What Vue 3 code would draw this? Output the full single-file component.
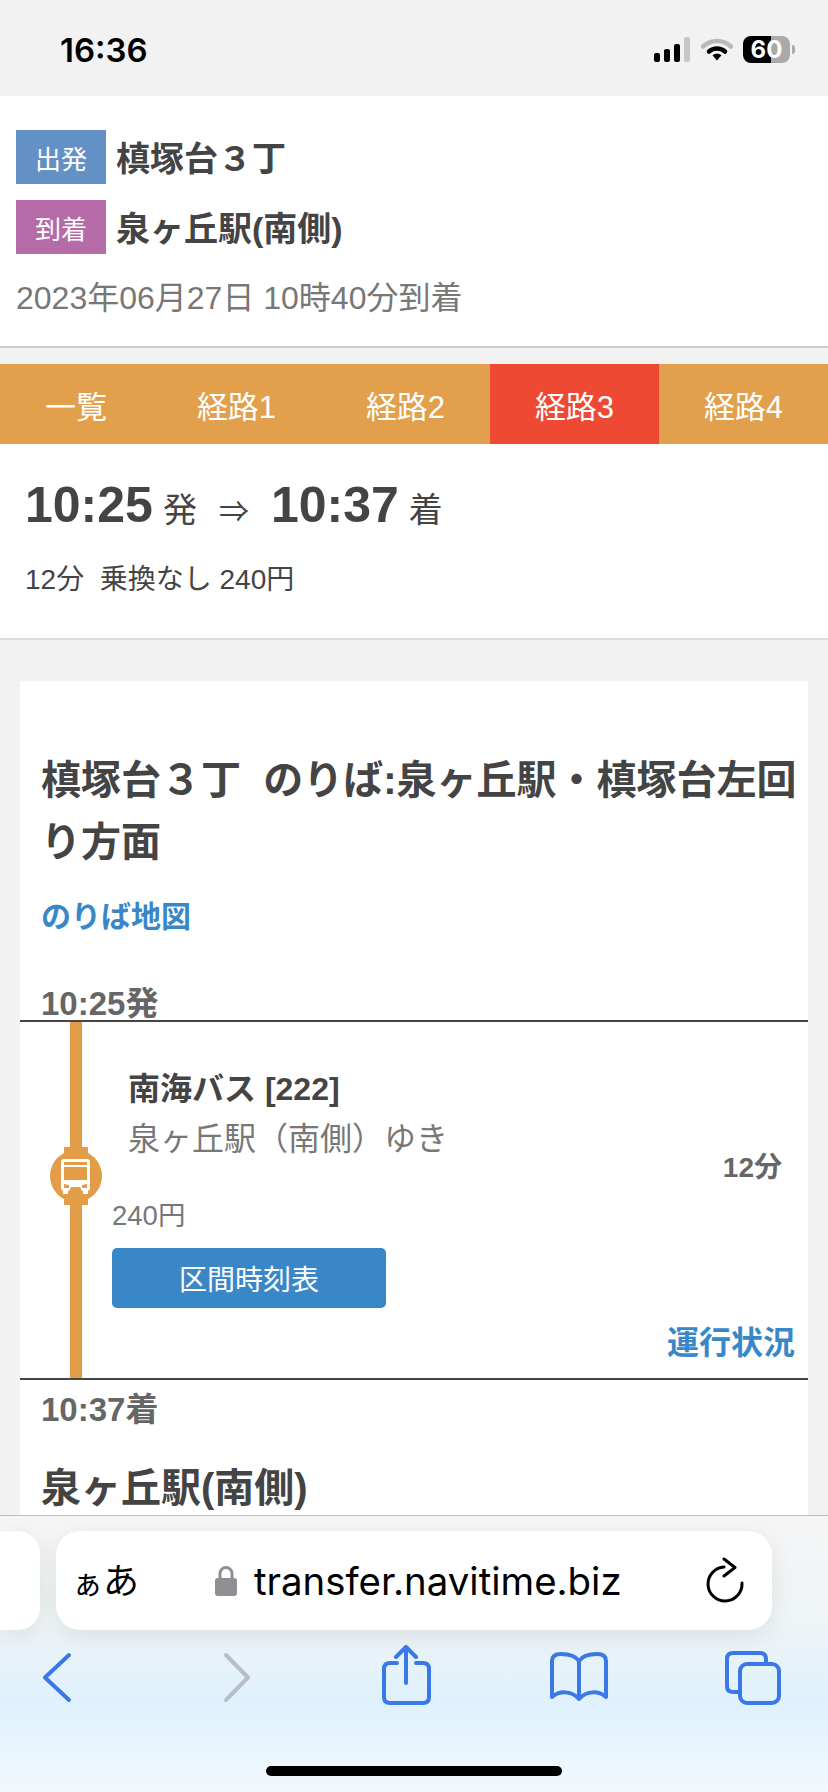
<script setup>
const tabs = [
  { label: '一覧', wide: false },
  { label: '経路1', wide: true },
  { label: '経路2', wide: true },
  { label: '経路3', wide: true, active: true },
  { label: '経路4', wide: true }
]
</script>

<template>
  <div class="screen">
    <header class="status">
      <span class="clock">16:36</span>
      <div class="status-icons">
        <div class="signal"><i class="b1"></i><i class="b2"></i><i class="b3"></i><i class="b4"></i></div>
        <svg class="wifi" width="32" height="24" viewBox="0 0 32 24">
          <path d="M2 9.5C10 2 22 2 30 9.5" fill="none" stroke="#b9b9b9" stroke-width="4.5" stroke-linecap="round"/>
          <path d="M8 14.5C12.5 10.5 19.5 10.5 24 14.5" fill="none" stroke="#000" stroke-width="4.5" stroke-linecap="round"/>
          <path d="M11.5 18.2C14.5 16 17.5 16 20.5 18.2L16 23.5Z" fill="#000"/>
        </svg>
        <div class="battery">60</div>
      </div>
    </header>

    <main class="page">
      <section class="route">
        <div class="point">
          <span class="badge dep">出発</span>
          <span class="point-name">槙塚台３丁</span>
        </div>
        <div class="point">
          <span class="badge arr">到着</span>
          <span class="point-name">泉ヶ丘駅(南側)</span>
        </div>
        <p class="when">2023年06月27日 10時40分到着</p>
      </section>

      <nav class="tabs">
        <span
          v-for="t in tabs"
          :key="t.label"
          class="tab"
          :class="{ wide: t.wide, active: t.active }"
        >{{ t.label }}</span>
      </nav>

      <section class="summary">
        <div class="times">
          <strong class="big">10:25</strong><span class="suffix">発</span>
          <span class="arrow">⇒</span>
          <strong class="big">10:37</strong><span class="suffix">着</span>
        </div>
        <p class="meta">12分&nbsp;&nbsp;乗換なし 240円</p>
      </section>

      <section class="card">
        <h2 class="stop-title">槙塚台３丁&nbsp;&nbsp;のりば:泉ヶ丘駅・槙塚台左回り方面</h2>
        <a class="stop-map">のりば地図</a>
        <div class="stamp first">10:25発</div>

        <div class="leg">
          <div class="rail">
            <span class="rail-top"></span>
            <svg class="rail-icon" width="52" height="58" viewBox="0 0 52 58">
              <rect x="14" y="0" width="24" height="58" fill="#e39d48"/>
              <circle cx="26" cy="29" r="26" fill="#e39d48"/>
              <path d="M14 12H37Q40 12 40 15V41Q40 44 37 44H14Q11 44 11 41V15Q11 12 14 12Z" fill="#fff"/>
              <rect x="14" y="15" width="23" height="3" fill="#e39d48"/>
              <rect x="14" y="20" width="23" height="13" fill="#e39d48"/>
              <path d="M14 37L19 38V41H14ZM37 37L32 38V41H37Z" fill="#e39d48"/>
              <path d="M21 40H30L32 44H19Z" fill="#e39d48"/>
              <rect x="13" y="44" width="5" height="3" fill="#fff"/>
              <rect x="33" y="44" width="5" height="3" fill="#fff"/>
            </svg>
            <span class="rail-bottom"></span>
          </div>
          <div class="leg-body">
            <div class="leg-head">
              <div class="leg-names">
                <div class="line-name">南海バス [222]</div>
                <div class="line-dest">泉ヶ丘駅（南側）ゆき</div>
              </div>
              <div class="leg-mins">12分</div>
            </div>
            <div class="fare">240円</div>
            <button class="timetable">区間時刻表</button>
            <a class="status-link">運行状況</a>
          </div>
        </div>

        <div class="stamp last">10:37着</div>
        <h2 class="stop-title end">泉ヶ丘駅(南側)</h2>
      </section>
    </main>

    <footer class="toolbar">
      <div class="url-row">
        <div class="prev-tab"></div>
        <div class="address">
          <span class="aa"><small>ぁ</small>あ</span>
          <svg class="lock" width="22" height="31" viewBox="0 0 22 31">
            <path d="M5 15V8.5a6 6 0 0 1 12 0V15" fill="none" stroke="#8e8e93" stroke-width="3"/>
            <rect x="0" y="13" width="22" height="18" rx="3" fill="#8e8e93"/>
          </svg>
          <span class="url">transfer.navitime.biz</span>
          <svg class="reload" width="40" height="48" viewBox="0 0 40 48">
            <path d="M19 10A17 17 0 1 0 37 26" fill="none" stroke="#000" stroke-width="3" stroke-linecap="round"/>
            <path d="M19 2L30 10.500L19 19" fill="none" stroke="#000" stroke-width="3" stroke-linecap="round" stroke-linejoin="round"/>
          </svg>
        </div>
      </div>
      <div class="actions">
        <svg width="60" height="64" viewBox="0 0 60 64"><path class="ico" d="M42 10L18 32.500L42 55"/></svg>
        <svg width="60" height="64" viewBox="0 0 60 64"><path class="ico off" d="M20 10L42 32.500L20 55"/></svg>
        <svg width="60" height="64" viewBox="0 0 60 64">
          <path class="ico" d="M30 3V38M20 12L30 2L40 12"/>
          <path class="ico" d="M21 18H14Q8 18 8 24V52Q8 58 14 58H47Q53 58 53 52V24Q53 18 47 18H40"/>
        </svg>
        <svg width="60" height="64" viewBox="0 0 60 64">
          <path class="ico" d="M30 16C26 10 19 9 12 9C6 9 3 11 3 16V52C10 46 22 45 30 54C38 45 50 46 57 52V16C57 11 54 9 48 9C41 9 34 10 30 16V54"/>
        </svg>
        <svg width="60" height="64" viewBox="0 0 60 64">
          <path class="ico" d="M17 47H11Q5 47 5 41V14Q5 8 11 8H38Q44 8 44 14V18"/>
          <rect class="ico" x="18" y="19" width="39" height="39" rx="7"/>
        </svg>
      </div>
      <div class="home-bar"></div>
    </footer>
  </div>
</template>

<style scoped>
.screen {
  width: 828px;
  height: 1792px;
  display: flex;
  flex-direction: column;
  overflow: hidden;
  background: #f2f2f2;
  color: #444;
  font-family: "Liberation Sans", "Noto Sans CJK JP", sans-serif;
}
.status {
  flex: none;
  height: 96px;
  display: flex;
  justify-content: space-between;
  align-items: center;
  padding: 0 38px 0 60px;
  box-sizing: border-box;
}
.clock {
  margin-top: 4px;
  font-family: Inter, sans-serif;
  font-weight: 600;
  font-size: 33px;
  color: #000;
}
.status-icons {
  display: flex;
  align-items: center;
  margin-top: 2px;
}
.signal {
  display: flex;
  align-items: flex-end;
  gap: 4px;
  height: 25px;
  margin-right: 11px;
}
.signal i {
  display: block;
  width: 6px;
  border-radius: 2px;
  background: #000;
}
.b1 { height: 9px; }
.b2 { height: 13px; }
.b3 { height: 18px; }
.signal .b4 { height: 25px; background: #c6c6c6; }
.wifi { margin-right: 10px; }
.battery {
  position: relative;
  width: 47px;
  height: 27px;
  border-radius: 8px;
  background: linear-gradient(to right, #000 60%, #aaa 60%);
  color: #fff;
  font-family: Inter, sans-serif;
  font-weight: 700;
  font-size: 24px;
  line-height: 27px;
  text-align: center;
}
.battery::after {
  content: "";
  position: absolute;
  left: 49px;
  top: 9px;
  width: 3px;
  height: 9px;
  border-radius: 0 3px 3px 0;
  background: #aaa;
}
.page {
  flex: 1;
  min-height: 0;
  overflow: hidden;
}
.route {
  background: #fff;
  padding: 34px 16px 28px;
  border-bottom: 2px solid #ccc;
}
.point {
  display: flex;
  align-items: center;
  gap: 10px;
  margin-bottom: 16px;
}
.badge {
  width: 90px;
  height: 54px;
  display: flex;
  align-items: center;
  justify-content: center;
  color: #fff;
  font-size: 26px;
}
.dep { background: #6491c5; }
.arr { background: #b56ba8; }
.point-name {
  padding-bottom: 2px;
  font-size: 34px;
  font-weight: 700;
}
.when {
  margin: 24px 0 0;
  font-size: 32px;
  line-height: 40px;
  color: #777;
}
.tabs {
  display: flex;
  height: 80px;
  margin-top: 16px;
  background: #e29f4c;
}
.tab {
  width: 152px;
  display: flex;
  align-items: center;
  justify-content: center;
  color: #fff;
  font-size: 31px;
}
.tab.wide { width: 169px; }
.tab.active { background: #ee4a33; }
.summary {
  background: #fff;
  padding: 31px 25px 38px;
  border-bottom: 2px solid #ddd;
}
.times {
  display: flex;
  align-items: baseline;
  height: 60px;
  line-height: 60px;
}
.big {
  font-size: 50px;
}
.suffix {
  font-size: 34px;
  margin-left: 10px;
}
.arrow {
  font-size: 30px;
  margin: 0 22px 0 22px;
}
.meta {
  margin: 25px 0 0;
  font-size: 28px;
  line-height: 40px;
}
.card {
  margin: 41px 20px 0;
  background: #fff;
  padding-top: 68px;
}
.stop-title {
  margin: 0;
  padding: 0 6px 0 21px;
  font-size: 40px;
  line-height: 62px;
  font-weight: 700;
}
.stop-map {
  display: block;
  margin: 22px 0 0 21px;
  font-size: 30px;
  line-height: 44px;
  font-weight: 700;
  color: #3a87c8;
}
.stamp {
  padding-left: 21px;
  font-size: 33px;
  font-weight: 700;
  line-height: 32px;
  color: #666;
}
.stamp.first {
  margin-top: 49px;
}
.stamp.last {
  margin-top: 14px;
}
.stop-title.end {
  margin-top: 31px;
}
.leg {
  display: flex;
  border-top: 2px solid #444;
  border-bottom: 2px solid #444;
  height: 360px;
  box-sizing: border-box;
}
.rail {
  flex: none;
  width: 52px;
  margin-left: 30px;
  display: flex;
  flex-direction: column;
  align-items: center;
}
.rail-top,
.rail-bottom {
  width: 12px;
  background: #e39d48;
}
.rail-top { height: 125px; }
.rail-bottom { flex: 1; }
.rail-icon {
  flex: none;
  display: block;
}
.leg-body {
  flex: 1;
  min-width: 0;
  display: flex;
  flex-direction: column;
  padding: 45px 13px 0 10px;
}
.leg-head {
  display: flex;
  justify-content: space-between;
  align-items: flex-end;
  padding: 0 13px 0 16px;
}
.leg-names {
  padding-bottom: 29px;
}
.line-name {
  font-size: 32px;
  line-height: 44px;
  font-weight: 700;
}
.line-dest {
  margin-top: 3px;
  font-size: 32px;
  line-height: 50px;
  color: #777;
}
.leg-mins {
  font-size: 28px;
  font-weight: 700;
  line-height: 50px;
  color: #666;
}
.fare {
  margin-top: 3px;
  font-size: 27.500px;
  line-height: 40px;
  color: #777;
}
.timetable {
  width: 274px;
  height: 60px;
  margin-top: 12px;
  padding: 0;
  border: 0;
  border-radius: 5px;
  background: #3a87c8;
  color: #fff;
  font: inherit;
  font-size: 28px;
}
.status-link {
  margin-top: 10px;
  align-self: flex-end;
  font-size: 32px;
  line-height: 50px;
  font-weight: 700;
  color: #3a87c8;
}
.toolbar {
  flex: none;
  height: 277px;
  box-sizing: border-box;
  border-top: 1px solid #bdbdbd;
  background: linear-gradient(to bottom, #f5f5f5 0%, #eff4f6 36%, #dff1fd 68%, #f2f9fe 100%);
  position: relative;
  z-index: 1;
}
.url-row {
  display: flex;
  gap: 16px;
  padding-top: 15px;
}
.prev-tab {
  width: 40px;
  height: 99px;
  border-radius: 0 22px 22px 0;
  background: #fff;
  box-shadow: 0 6px 24px rgba(0, 0, 0, .08);
}
.address {
  width: 716px;
  height: 99px;
  border-radius: 24px;
  background: #fff;
  box-shadow: 0 6px 24px rgba(0, 0, 0, .08);
  display: flex;
  align-items: center;
  color: #000;
  box-sizing: border-box;
  padding-left: 16px;
}
.aa {
  width: 65px;
  margin-top: 4px;
  font-size: 36px;
  line-height: 40px;
  white-space: nowrap;
}
.aa small {
  font-size: 31px;
}
.lock {
  margin-left: 78px;
  flex: none;
}
.url {
  margin-left: 17px;
  font-family: Inter, sans-serif;
  font-size: 38.400px;
  white-space: nowrap;
}
.reload {
  flex: none;
  margin-left: 83px;
}
.actions {
  display: grid;
  grid-template-columns: 179px 170px 173px 173px 60px;
  padding: 15px 0 0 27px;
}
.actions svg {
  display: block;
}
.ico {
  fill: none;
  stroke: #3b78e7;
  stroke-width: 4;
  stroke-linecap: round;
  stroke-linejoin: round;
}
.ico.off {
  stroke: #b8bec4;
}
.home-bar {
  width: 296px;
  height: 10px;
  margin: 57px auto 0;
  border-radius: 5px;
  background: #000;
}
</style>
